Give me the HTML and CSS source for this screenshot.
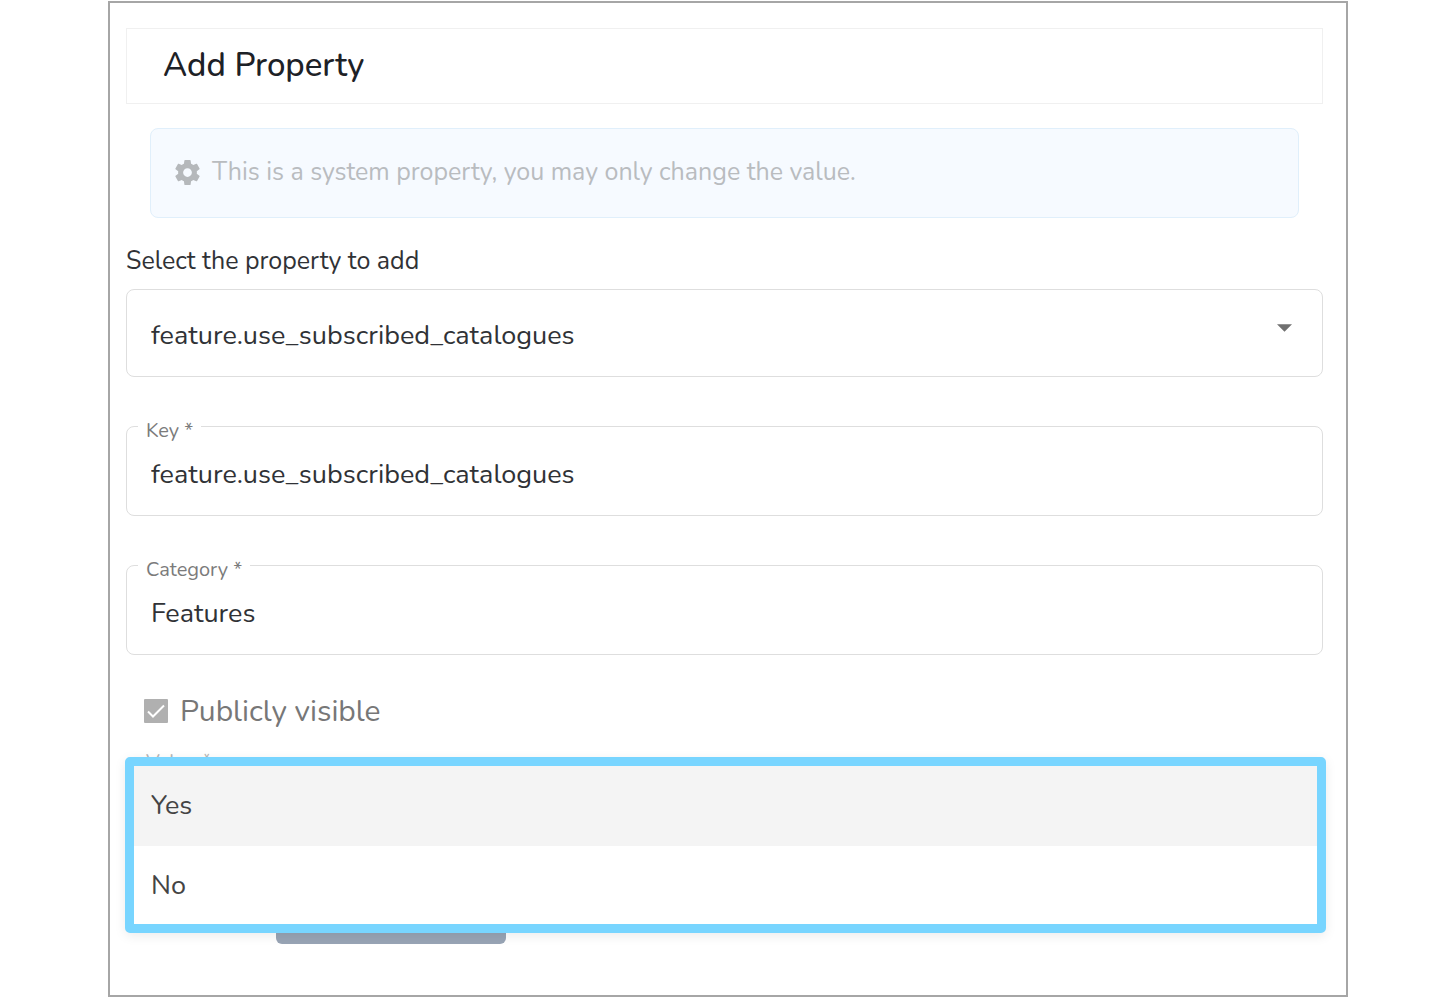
FILE: index.html
```html
<!DOCTYPE html>
<html lang="en">
<head>
<meta charset="utf-8">
<meta name="viewport" content="width=device-width, initial-scale=1">
<title>Add Property</title>
<link rel="stylesheet" href="styles.css">
</head>
<body>
<main class="dialog">
  <header class="dialog-header"><h1 class="dialog-title">Add Property</h1></header>
  <p class="notice">
    <svg class="notice-icon" viewBox="2 2 20 20" aria-hidden="true"><path d="M19.43 12.98c.04-.32.07-.64.07-.98s-.03-.66-.07-.98l2.11-1.65c.19-.15.24-.42.12-.64l-2-3.46c-.12-.22-.39-.3-.61-.22l-2.49 1c-.52-.4-1.08-.73-1.69-.98l-.38-2.65A.49.49 0 0 0 14 2h-4c-.25 0-.46.18-.49.42l-.38 2.65c-.61.25-1.17.59-1.69.98l-2.49-1c-.23-.09-.49 0-.61.22l-2 3.46c-.13.22-.07.49.12.64l2.11 1.65c-.04.32-.07.65-.07.98s.03.66.07.98l-2.11 1.65c-.19.15-.24.42-.12.64l2 3.46c.12.22.39.3.61.22l2.49-1c.52.4 1.08.73 1.69.98l.38 2.65c.03.24.24.42.49.42h4c.25 0 .46-.18.49-.42l.38-2.65c.61-.25 1.17-.59 1.69-.98l2.49 1c.23.09.49 0 .61-.22l2-3.46c.12-.22.07-.49-.12-.64l-2.11-1.65zM12 15.5A3.5 3.5 0 1 1 12 8.500a3.500 3.500 0 0 1 0 7z"/></svg>
    <span>This is a system property, you may only change the value.</span>
  </p>
  <form class="form">
    <div class="picker">
      <label class="picker-label" for="property">Select the property to add</label>
      <div class="field">
        <select class="control control-select" id="property"><option>feature.use_subscribed_catalogues</option></select>
        <svg class="arrow" viewBox="0 0 16 8" aria-hidden="true"><path d="M0 0h16L8 8z"/></svg>
      </div>
    </div>
    <div class="field">
      <label class="field-label" for="key">Key *</label>
      <input class="control" id="key" type="text" value="feature.use_subscribed_catalogues" readonly>
    </div>
    <div class="field">
      <label class="field-label" for="category">Category *</label>
      <input class="control" id="category" type="text" value="Features" readonly>
    </div>
    <div class="check">
      <input class="check-box" id="public" type="checkbox" checked disabled>
      <svg class="check-mark" viewBox="0 0 24 24" aria-hidden="true"><path d="M4 12.500l5 5L20 6.500"/></svg>
      <label class="check-label" for="public">Publicly visible</label>
    </div>
    <div class="field field-value">
      <span class="field-label field-label-muted" id="value-label">Value *</span>
      <div class="control"></div>
      <div class="menu" role="listbox" aria-labelledby="value-label">
        <button class="option option-active" type="button" role="option" aria-selected="true">Yes</button>
        <button class="option" type="button" role="option" aria-selected="false">No</button>
      </div>
    </div>
    <button class="submit" type="button" aria-label="Save"></button>
  </form>
</main>
</body>
</html>
```
FILE: styles.css
```css
* { box-sizing: border-box; }

body {
  margin: 0;
  padding: 1px 97px 0 108px;
  background: #fff;
  color: #303236;
  font-family: Nunito, Lato, sans-serif;
  font-size: 27px;
  line-height: 32px;
}

.dialog {
  min-height: calc(100vh - 1px);
  padding: 25px 23px 32px 16px;
  border: 2px solid #a6a6a6;
}

.dialog-header {
  padding: 16px 36px;
  border: 1px solid #f0f0f0;
}

.dialog-title {
  margin: 0;
  color: #1d2126;
  font-size: 33px;
  font-weight: 500;
  line-height: 42px;
}

.notice {
  display: flex;
  align-items: center;
  gap: 12px;
  min-height: 90px;
  margin: 24px 24px 0;
  padding: 0 24px 2px;
  border: 1px solid #e0effb;
  border-radius: 8px;
  background: #f6faff;
  color: #b9bcbf;
  font-size: 25px;
}

.notice-icon {
  flex: none;
  width: 25px;
  height: 25px;
  fill: #b5b8bb;
}

.form {
  display: flex;
  flex-direction: column;
  gap: 49px;
  padding-top: 27px;
}

.picker-label {
  display: block;
  margin-bottom: 12px;
  font-size: 25px;
}

.field { position: relative; }

.control {
  display: block;
  width: 100%;
  height: 90px;
  padding: 6px 24px 0;
  border: 1px solid #dedede;
  border-radius: 8px;
  background: #fff;
  color: #303236;
  font: inherit;
  outline: none;
}

.control-select {
  height: 88px;
  appearance: none;
}

.arrow {
  position: absolute;
  top: 35px;
  right: 31px;
  width: 15px;
  height: 8px;
  fill: #707070;
  pointer-events: none;
}

.field-label {
  position: absolute;
  top: -7px;
  left: 12px;
  padding: 0 8px;
  background: #fff;
  color: #7b7b7b;
  font-size: 20px;
  line-height: 24px;
}

.field-label-muted { color: #b5b5b5; }

.check {
  display: grid;
  grid-template-columns: 24px 1fr;
  column-gap: 12px;
  align-items: center;
  margin-top: -11px;
  padding-left: 18px;
}

.check-box,
.check-mark {
  grid-area: 1 / 1;
  width: 24px;
  height: 24px;
  margin: 0;
}

.check-box {
  appearance: none;
  border-radius: 1px;
  background: #b0b0b0;
}

.check-mark {
  fill: none;
  stroke: #fff;
  stroke-width: 2;
  pointer-events: none;
}

.check-label {
  padding-top: 2px;
  color: #777;
  font-size: 30px;
  line-height: 34px;
}

.field-value { margin-top: -21px; }

.menu {
  position: absolute;
  top: 0;
  right: -3px;
  left: -1px;
  border: 9px solid #78d5ff;
  border-radius: 5px;
  background: #fff;
  box-shadow: 0 3px 12px rgba(0, 0, 0, 0.08);
}

.option {
  display: block;
  width: 100%;
  height: 78px;
  padding: 2px 17px 0;
  border: 0;
  background: #fff;
  color: #444;
  font: inherit;
  text-align: left;
}

.option-active {
  height: 80px;
  padding-top: 0;
  background: #f4f4f4;
}

.submit {
  width: 230px;
  height: 60px;
  margin: -12px 0 0 150px;
  border: 0;
  border-radius: 6px;
  background: #98a4b5;
}
```
